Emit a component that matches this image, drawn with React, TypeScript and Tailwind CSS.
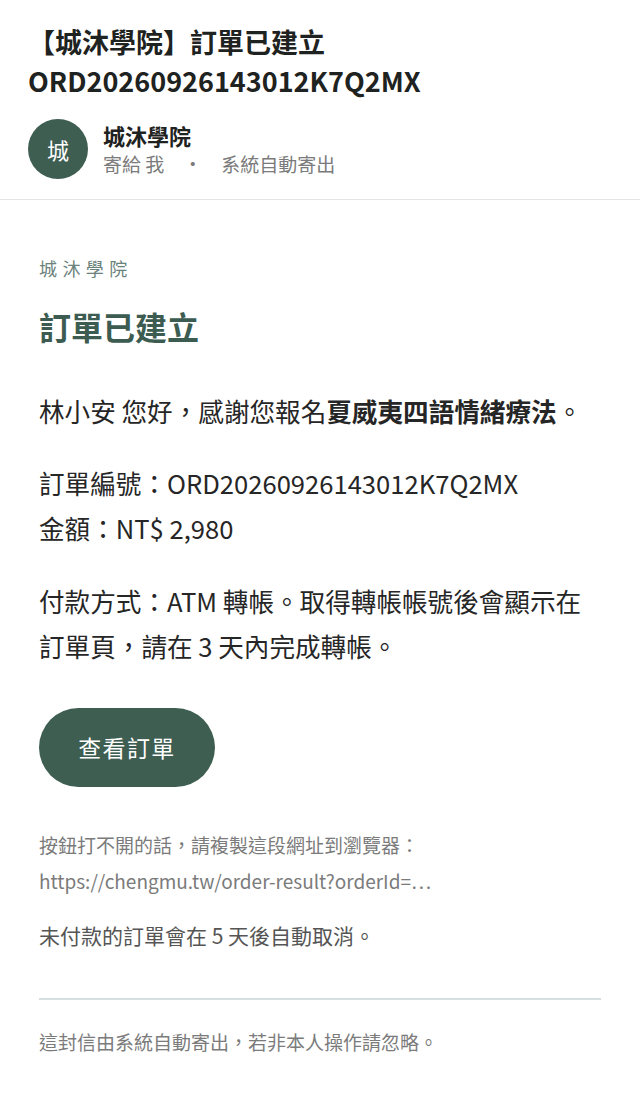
export default function App() {
  return (
    <div className="min-h-screen bg-white font-['Noto_Sans_CJK_TC','Noto_Sans_CJK_SC',sans-serif] text-[#262626]">
      {/* Mail header */}
      <div className="border-b border-[#e3e5e5] px-7 pt-[22px] pb-[20px]">
        <h1 className="text-[27px] font-bold leading-[39px] text-[#1e2220]">
          【城沐學院】訂單已建立
          <br />
          ORD20260926143012K7Q2MX
        </h1>
        <div className="mt-[19px] flex items-center gap-[15px]">
          <div className="flex h-[60px] w-[60px] shrink-0 items-center justify-center rounded-full bg-[#3e5e52] text-[22px] text-white">
            城
          </div>
          <div className="flex flex-col">
            <span className="text-[22px] font-bold leading-[30px] text-[#1e2220]">
              城沐學院
            </span>
            <span className="text-[19px] leading-[28px] text-[#7b7b7b]">
              寄給 我<span className="mx-[19px]">·</span>系統自動寄出
            </span>
          </div>
        </div>
      </div>

      {/* Mail body */}
      <div className="px-[39px] pt-[54px] pb-10">
        <div className="text-[18px] leading-[28px] tracking-[0.3em] text-[#6a827b]">
          城沐學院
        </div>
        <h2 className="mt-[22px] text-[32px] font-bold leading-[44px] text-[#3d5c51]">
          訂單已建立
        </h2>

        <p className="mt-[40px] text-[25.6px] leading-[45px]">
          林小安 您好，感謝您報名<strong className="font-bold">夏威夷四語情緒療法</strong>。
        </p>

        <p className="mt-[27px] text-[25.6px] leading-[45px]">
          訂單編號：ORD20260926143012K7Q2MX
          <br />
          金額：NT$ 2,980
        </p>

        <p className="mt-[28px] text-[25.6px] leading-[45px]">
          付款方式：ATM 轉帳。取得轉帳帳號後會顯示在訂單頁，請在 3 天內完成轉帳。
        </p>

        <a
          href="#"
          className="mt-[40px] flex h-[79px] w-[176px] items-center justify-center rounded-full bg-[#3e5e52] text-[23px] tracking-[0.06em] text-white"
        >
          查看訂單
        </a>

        <p className="mt-[40px] text-[19px] leading-[36px] text-[#7b7b7b]">
          按鈕打不開的話，請複製這段網址到瀏覽器：
          <br />
          https://chengmu.tw/order-result?orderId=⋯
        </p>

        <p className="mt-[18px] text-[21px] leading-[36px] text-[#555555]">
          未付款的訂單會在 5 天後自動取消。
        </p>

        <div className="mt-[45px] h-[2px] bg-[#d6e0e0]" />

        <p className="mt-[24px] text-[19px] leading-[36px] text-[#7b7b7b]">
          這封信由系統自動寄出，若非本人操作請忽略。
        </p>
      </div>
    </div>
  );
}
